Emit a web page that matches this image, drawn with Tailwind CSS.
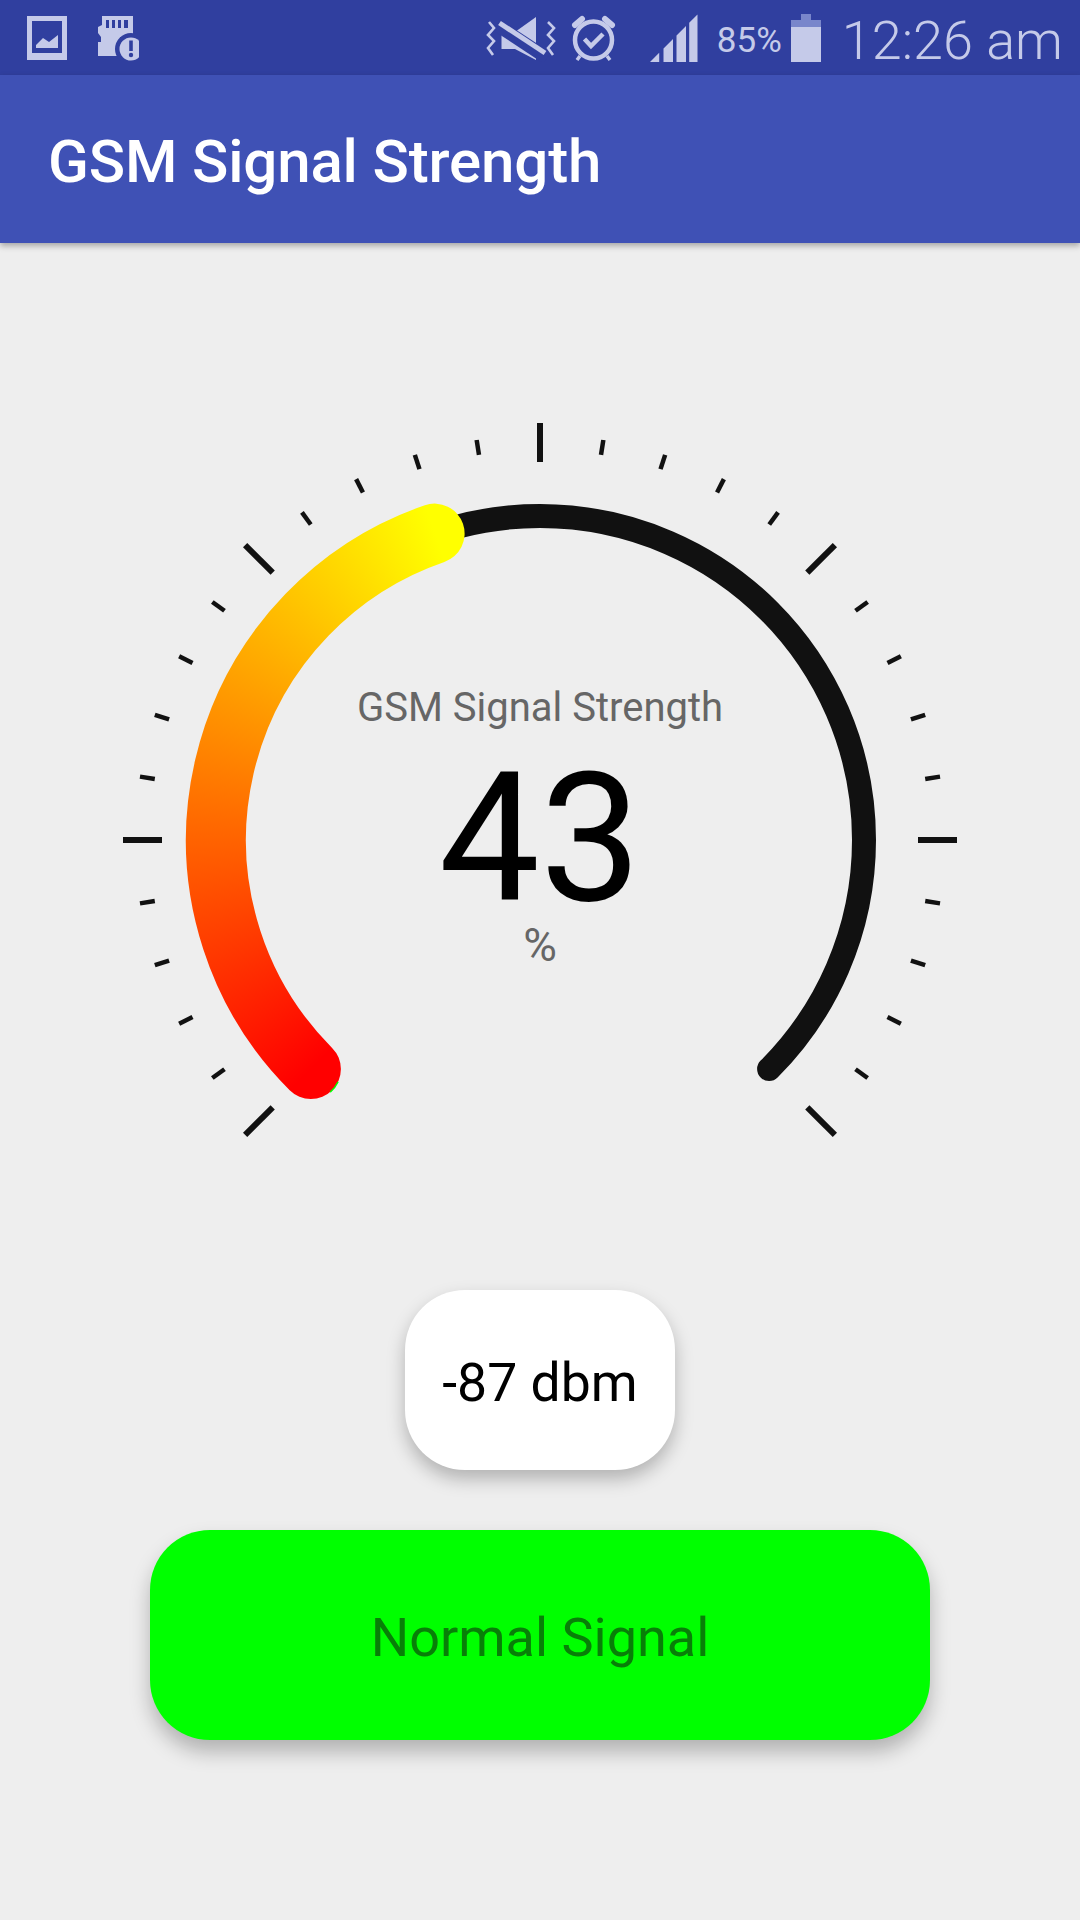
<!DOCTYPE html>
<html>
<head>
<meta charset="utf-8">
<script src="https://cdn.jsdelivr.net/npm/@tailwindcss/browser@4"></script>
</head>
<body class="m-0 bg-[#eeeeee]">
<div class="w-[1080px] h-[1920px] overflow-hidden bg-[#eeeeee] font-['Roboto',sans-serif] flex flex-col">
  <div class="h-[75px] shrink-0 bg-[#303f9f] flex items-center justify-between text-[#c5cae9]">
    <div class="flex items-center pl-[27px]">
      <svg class="w-[40px] h-[44px] block" viewBox="27 16 40 44"><path fill="#c5cae9" fill-rule="evenodd" d="M27 16H67V60H27ZM32 21V53H62V21Z"/><path fill="#c5cae9" d="M36 48V45L43 38L49 42L58 35V48Z"/></svg>
      <svg class="w-[44px] h-[46px] block ml-[28px]" viewBox="95 16 44 46"><path fill="#c5cae9" d="M102 17H133V38H120V57H98V43H101V38L98 34V28L102 26Z"/><path fill="#303f9f" d="M106 21H109V29H106ZM112 21H115V29H112ZM118 21H121V29H118ZM124 21H128V29H124Z"/><circle cx="131" cy="50" r="16" fill="#303f9f"/><circle cx="131" cy="50" r="11.5" fill="#c5cae9"/><path fill="#303f9f" d="M129.2 41.5H132.8V52H129.2Z"/><circle cx="131" cy="56" r="2.2" fill="#303f9f"/></svg>
    </div>
    <div class="flex items-center pr-[17px]">
      <svg class="w-[70px] h-[48px] block" viewBox="486 12 70 48"><path fill="#c5cae9" d="M501.5 30H515L536 15V58L515 47H501.5Z"/><path stroke="#303f9f" stroke-width="13" d="M497 23L547 56"/><path stroke="#c5cae9" stroke-width="5" fill="none" d="M499.5 21L545 51"/><path stroke="#c5cae9" stroke-width="2.6" fill="none" d="M489 20L494 26L488 33L494 39L488 46L493 53"/><path stroke="#c5cae9" stroke-width="2.6" fill="none" d="M548 20L554 26L548 33L554 39L548 46L553 53"/></svg>
      <svg class="w-[46px] h-[48px] block ml-[15px]" viewBox="571 13 46 48"><circle cx="593.5" cy="39" r="18.5" fill="none" stroke="#c5cae9" stroke-width="4.5"/><path stroke="#c5cae9" stroke-width="6" stroke-linecap="round" d="M575 24L582 18M612 24L605 18"/><path stroke="#c5cae9" stroke-width="3.5" d="M580 55L577 59M607 55L610 59"/><path fill="none" stroke="#c5cae9" stroke-width="4.5" d="M584.5 38L591 45L603 33"/></svg>
      <svg class="w-[48px] h-[48px] block ml-[33px]" viewBox="650.5 13 48 48"><path fill="#c5cae9" d="M650.5 61L659.7 51.8V61ZM664 47.5L673.5 38V61H664ZM677 34.5L686.5 25V61H677ZM689.7 21.8L698 13.5V61H689.7Z"/></svg>
      <span class="ml-[19px] w-[64px] text-[35px] leading-[40px] whitespace-nowrap translate-y-[3px]">85%</span>
      <svg class="w-[30px] h-[48px] block ml-[10px]" viewBox="791 12 30 48"><path fill="#7986cb" d="M801 12H811V18H821V25H791V18H801Z"/><rect x="791" y="25" width="30" height="35" fill="#c5cae9"/></svg>
      <span class="ml-[21px] text-[54px] leading-[60px] font-[350] whitespace-nowrap translate-y-[3px]">12:26 am</span>
    </div>
  </div>
  <div class="h-[168px] shrink-0 bg-[#3f51b5] flex items-center pl-[48px] shadow-[0_3px_6px_rgba(0,0,0,0.3)] relative z-10">
    <span class="text-[60px] leading-[72px] font-medium text-white whitespace-nowrap tracking-[-0.15px] translate-y-[3px]">GSM Signal Strength</span>
  </div>
  <main class="relative flex flex-col items-center flex-1">
    <svg class="block w-[1080px] h-[1047px]" viewBox="0 243 1080 1047">
      <defs>
        <mask id="arcmask" maskUnits="userSpaceOnUse" x="0" y="243" width="1080" height="1047">
          <path d="M310.9 1069.1A324 324 0 0 1 434.6 533.6" fill="none" stroke="#fff" stroke-width="60" stroke-linecap="round"/>
        </mask>
      </defs>
      <path d="M310.9 1069.1A324 324 0 1 1 769.1 1069.1" fill="none" stroke="#111111" stroke-width="24" stroke-linecap="round"/>
      <g mask="url(#arcmask)">
        <foreignObject x="0" y="300" width="1080" height="1080">
          <div class="w-[1080px] h-[1080px] bg-[conic-gradient(from_225deg,#ff0000_0deg,#ffff00_116.1deg,#ffff00_190deg,#ff0000_190deg,#ff0000_360deg)]"></div>
        </foreignObject>
      </g>
      <path d="M338.1 1081.8A30 30 0 0 1 330.2 1092.1" fill="none" stroke="#00ff00" stroke-width="1.5"/>
      <g stroke="#111111" stroke-width="6">
        <line x1="540" y1="423" x2="540" y2="462" transform="rotate(-135 540 840)"/>
        <line x1="540" y1="423" x2="540" y2="462" transform="rotate(-90 540 840)"/>
        <line x1="540" y1="423" x2="540" y2="462" transform="rotate(-45 540 840)"/>
        <line x1="540" y1="423" x2="540" y2="462"/>
        <line x1="540" y1="423" x2="540" y2="462" transform="rotate(45 540 840)"/>
        <line x1="540" y1="423" x2="540" y2="462" transform="rotate(90 540 840)"/>
        <line x1="540" y1="423" x2="540" y2="462" transform="rotate(135 540 840)"/>
      </g>
      <g stroke="#111111" stroke-width="4.5">
        <line x1="540" y1="435" x2="540" y2="450" transform="rotate(-126 540 840)"/>
        <line x1="540" y1="435" x2="540" y2="450" transform="rotate(-117 540 840)"/>
        <line x1="540" y1="435" x2="540" y2="450" transform="rotate(-108 540 840)"/>
        <line x1="540" y1="435" x2="540" y2="450" transform="rotate(-99 540 840)"/>
        <line x1="540" y1="435" x2="540" y2="450" transform="rotate(-81 540 840)"/>
        <line x1="540" y1="435" x2="540" y2="450" transform="rotate(-72 540 840)"/>
        <line x1="540" y1="435" x2="540" y2="450" transform="rotate(-63 540 840)"/>
        <line x1="540" y1="435" x2="540" y2="450" transform="rotate(-54 540 840)"/>
        <line x1="540" y1="435" x2="540" y2="450" transform="rotate(-36 540 840)"/>
        <line x1="540" y1="435" x2="540" y2="450" transform="rotate(-27 540 840)"/>
        <line x1="540" y1="435" x2="540" y2="450" transform="rotate(-18 540 840)"/>
        <line x1="540" y1="435" x2="540" y2="450" transform="rotate(-9 540 840)"/>
        <line x1="540" y1="435" x2="540" y2="450" transform="rotate(9 540 840)"/>
        <line x1="540" y1="435" x2="540" y2="450" transform="rotate(18 540 840)"/>
        <line x1="540" y1="435" x2="540" y2="450" transform="rotate(27 540 840)"/>
        <line x1="540" y1="435" x2="540" y2="450" transform="rotate(36 540 840)"/>
        <line x1="540" y1="435" x2="540" y2="450" transform="rotate(54 540 840)"/>
        <line x1="540" y1="435" x2="540" y2="450" transform="rotate(63 540 840)"/>
        <line x1="540" y1="435" x2="540" y2="450" transform="rotate(72 540 840)"/>
        <line x1="540" y1="435" x2="540" y2="450" transform="rotate(81 540 840)"/>
        <line x1="540" y1="435" x2="540" y2="450" transform="rotate(99 540 840)"/>
        <line x1="540" y1="435" x2="540" y2="450" transform="rotate(108 540 840)"/>
        <line x1="540" y1="435" x2="540" y2="450" transform="rotate(117 540 840)"/>
        <line x1="540" y1="435" x2="540" y2="450" transform="rotate(126 540 840)"/>
      </g>
    </svg>
    <div class="absolute top-[441px] left-0 right-0 flex flex-col items-center">
      <div class="text-[40px] leading-[48px] text-[#666666] whitespace-nowrap">GSM Signal Strength</div>
      <div class="text-[180px] leading-[160px] text-black mt-[27px] whitespace-nowrap">43</div>
      <div class="text-[46px] leading-[48px] text-[#666666] mt-[2px]">%</div>
    </div>
    <div class="w-[270px] h-[180px] rounded-[60px] bg-white flex items-center justify-center shadow-[0_9px_18px_rgba(0,0,0,0.25)]">
      <span class="text-[53.5px] leading-[64px] text-black whitespace-nowrap translate-y-[3px]">-87 dbm</span>
    </div>
    <div class="w-[780px] h-[210px] mt-[60px] rounded-[60px] bg-[#00ff00] flex items-center justify-center shadow-[0_12px_20px_rgba(0,0,0,0.25)]">
      <span class="text-[54px] leading-[64px] text-[#087f08] whitespace-nowrap translate-y-[3px]">Normal Signal</span>
    </div>
  </main>
</div>
</body>
</html>
